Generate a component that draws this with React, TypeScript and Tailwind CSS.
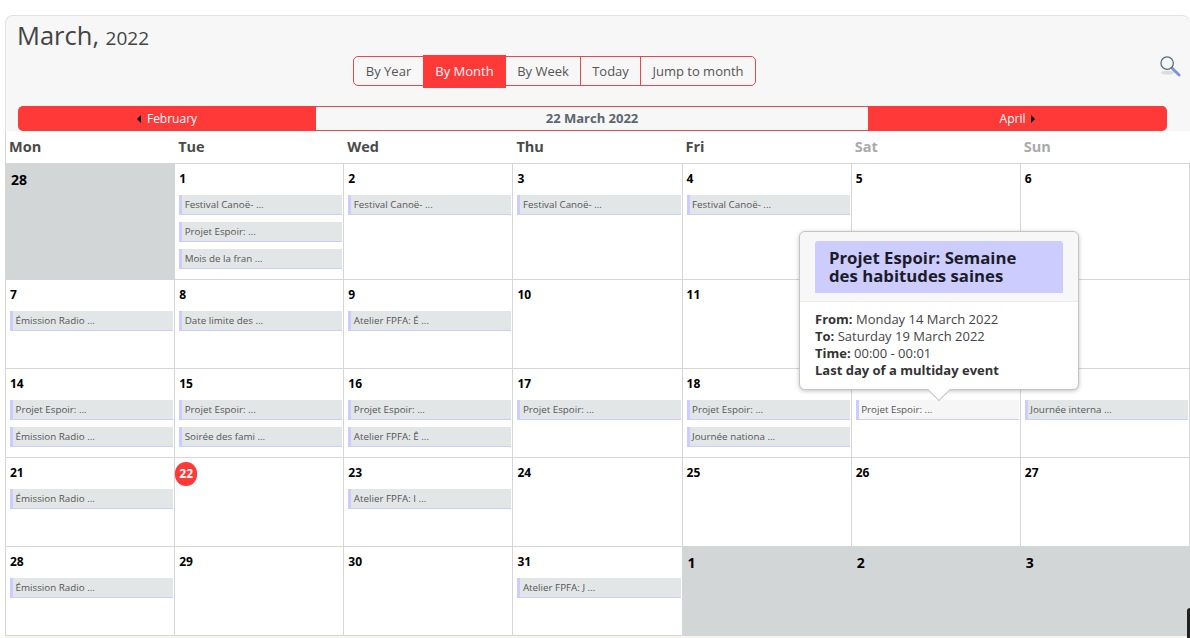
import React from 'react'

type Day = { n: number; out?: boolean; events?: string[]; today?: boolean; hover?: boolean; covered?: boolean }

const weeks: Day[][] = [
    [
        { n: 28, out: true },
        { n: 1, events: ['Festival Canoë- ...', 'Projet Espoir: ...', 'Mois de la fran ...'] },
        { n: 2, events: ['Festival Canoë- ...'] },
        { n: 3, events: ['Festival Canoë- ...'] },
        { n: 4, events: ['Festival Canoë- ...'] },
        { n: 5 },
        { n: 6 },
    ],
    [
        { n: 7, events: ['Émission Radio ...'] },
        { n: 8, events: ['Date limite des ...'] },
        { n: 9, events: ['Atelier FPFA: É ...'] },
        { n: 10 },
        { n: 11 },
        { n: 12, covered: true },
        { n: 13, covered: true },
    ],
    [
        { n: 14, events: ['Projet Espoir: ...', 'Émission Radio ...'] },
        { n: 15, events: ['Projet Espoir: ...', 'Soirée des fami ...'] },
        { n: 16, events: ['Projet Espoir: ...', 'Atelier FPFA: Ê ...'] },
        { n: 17, events: ['Projet Espoir: ...'] },
        { n: 18, events: ['Projet Espoir: ...', 'Journée nationa ...'] },
        { n: 19, events: ['Projet Espoir: ...'], hover: true, covered: true },
        { n: 20, events: ['Journée interna ...'], covered: true },
    ],
    [
        { n: 21, events: ['Émission Radio ...'] },
        { n: 22, today: true },
        { n: 23, events: ['Atelier FPFA: I ...'] },
        { n: 24 },
        { n: 25 },
        { n: 26 },
        { n: 27 },
    ],
    [
        { n: 28, events: ['Émission Radio ...'] },
        { n: 29 },
        { n: 30 },
        { n: 31, events: ['Atelier FPFA: J ...'] },
        { n: 1, out: true },
        { n: 2, out: true },
        { n: 3, out: true },
    ],
]

const dayNames = ['Mon', 'Tue', 'Wed', 'Thu', 'Fri', 'Sat', 'Sun']
const views = ['By Year', 'By Month', 'By Week', 'Today', 'Jump to month']

const SearchIcon = () => (
    <svg width="22" height="22" viewBox="0 0 23 23">
        <ellipse cx="9" cy="18.5" rx="7" ry="2" fill="#dcdcdc" />
        <path d="M13.5 13.5 L21 21" stroke="#7f94d6" strokeWidth="3" strokeLinecap="round" />
        <circle cx="8.5" cy="8.5" r="6.5" fill="#f4f7fa" stroke="#5c6b78" strokeWidth="1.3" />
    </svg>
)

const Toolbar = () => (
    <div className="flex items-center h-[30px] border border-[#e04b4b] rounded-[5px] text-[13px] text-[#555]">
        {views.map((v) =>
            v === 'By Month' ? (
                <div key={v} className="h-[33px] w-[83px] pt-px bg-[#ff3838] text-white flex items-center justify-center">
                    {v}
                </div>
            ) : (
                <div
                    key={v}
                    className={`h-full pt-px flex items-center justify-center border-[#e04b4b] ${
                        v === 'By Year' ? 'w-[69px]' : v === 'By Week' ? 'w-[75px] border-r' : v === 'Today' ? 'w-[60px] border-r' : 'w-[114px]'
                    }`}
                >
                    {v}
                </div>
            ),
        )}
    </div>
)

const Cell = ({ day }: { day: Day }) => {
    if (day.out) {
        return (
            <div className="bg-[#d3d6d7] pl-[5px] pt-[5px] text-[14px] font-bold text-black border-b border-[#d3d6d7]">
                {day.n}
            </div>
        )
    }
    return (
        <div className="border-b border-r border-[#d6d6d6] pl-[4px] pr-px pt-[6px]">
            {day.today ? (
                <div className="-ml-[4px] -mt-[2px] mb-[2px] h-[24px] w-[22px] rounded-[11px] bg-[#ff3838] text-white text-[12px] font-bold flex items-center justify-center">
                    {day.n}
                </div>
            ) : (
                <div className={`h-[18px] text-[12px] font-bold leading-[18px] text-black ${day.covered ? 'invisible' : ''}`}>{day.n}</div>
            )}
            <div className="mt-[7px] flex flex-col gap-[7px]">
                {day.events?.map((e, i) => (
                    <div
                        key={i}
                        className={`h-[20px] border-l-[3px] border-b border-[#ccccff] pl-[2.5px] text-[9.8px] leading-[20px] text-[#555] ${
                            day.hover ? 'bg-[#f6f6f6]' : 'bg-[#e3e6e7]'
                        }`}
                    >
                        {e}
                    </div>
                ))}
            </div>
        </div>
    )
}

const Popup = () => (
    <div className="absolute left-[799px] top-[231px] w-[280px] h-[159px] bg-white border border-[#c4c4c4] rounded-[6px] shadow-[0_1px_4px_rgba(0,0,0,0.25)]">
        <div className="h-[70px] bg-[#f7f7f7] border-b border-[#ececec] rounded-t-[6px] pt-[9px] px-[15px]">
            <div className="h-[52px] bg-[#ccccff] rounded-t-[3px] pl-[14px] pt-[8px] text-[16.75px] leading-[18px] font-bold text-[#1c1c28]">
                Projet Espoir: Semaine
                <br />
                des habitudes saines
            </div>
        </div>
        <div className="px-[15px] pt-[9px] text-[13px] leading-[17px] text-[#444]">
            <div><b className="text-[#333]">From:</b> Monday 14 March 2022</div>
            <div><b className="text-[#333]">To:</b> Saturday 19 March 2022</div>
            <div><b className="text-[#333]">Time:</b> 00:00 - 00:01</div>
            <div className="font-bold text-[#333]">Last day of a multiday event</div>
        </div>
        <div className="absolute left-[131px] -bottom-[9px] h-[16px] w-[16px] rotate-45 bg-white border-r border-b border-[#c4c4c4]" />
    </div>
)

export default function App() {
    return (
        <div
            className="relative w-[1190px] h-[638px] overflow-hidden bg-white pl-[5px] pt-[15px]"
            style={{ fontFamily: '"Open Sans", "Noto Sans", sans-serif' }}
        >
            <div className="h-[116px] bg-[#f7f7f7] border-t border-l border-[#e2e2e2] rounded-t-[8px] pl-[12px]">
                <div className="h-[40px] -ml-px text-[25.5px] leading-[38px] text-[#444]">
                    March, <span className="text-[19px]">2022</span>
                </div>
                <div className="flex h-[30px] pl-[335px] pr-[9px]">
                    <Toolbar />
                    <div className="ml-auto -mt-px"><SearchIcon /></div>
                </div>
                <div className="mt-[20px] flex h-[25px] w-[1149px] text-[12px] leading-[25px]">
                    <div className="w-[298px] bg-[#ff3838] rounded-l-[5px] text-white flex items-center justify-center gap-[6px]">
                        <span className="h-0 w-0 border-y-[4px] border-r-[4px] border-y-transparent border-r-black" />
                        February
                    </div>
                    <div className="flex-1 border-y border-[#e04b4b] text-center text-[13px] font-bold text-[#5b6670] leading-[23px]">
                        22 March 2022
                    </div>
                    <div className="w-[299px] bg-[#ff3838] rounded-r-[5px] text-white flex items-center justify-center gap-[6px]">
                        April
                        <span className="h-0 w-0 border-y-[4px] border-l-[4px] border-y-transparent border-l-black" />
                    </div>
                </div>
            </div>

            <div className="grid grid-cols-7 w-[1185px] border-l border-[#d6d6d6]">
                {dayNames.map((d, i) => (
                    <div
                        key={d}
                        className={`h-[33px] border-b border-[#d6d6d6] pl-[3px] pt-[5px] text-[14.5px] leading-[22px] font-bold ${
                            i > 4 ? 'text-[#aaa]' : 'text-[#4a4a4a]'
                        }`}
                    >
                        {d}
                    </div>
                ))}
            </div>
            <div className="grid grid-cols-7 grid-rows-[116px_89px_89px_89px_89px] w-[1185px] border-l border-[#d6d6d6]">
                {weeks.map((w, wi) => w.map((day, di) => <Cell key={`${wi}-${di}`} day={day} />))}
            </div>
            <div className="h-[3px] bg-[#f6f6ee]" />

            <Popup />
            <div className="absolute right-0 bottom-0 h-[30px] w-[3px] rounded-tl-[4px] bg-[#222]" />
        </div>
    )
}
